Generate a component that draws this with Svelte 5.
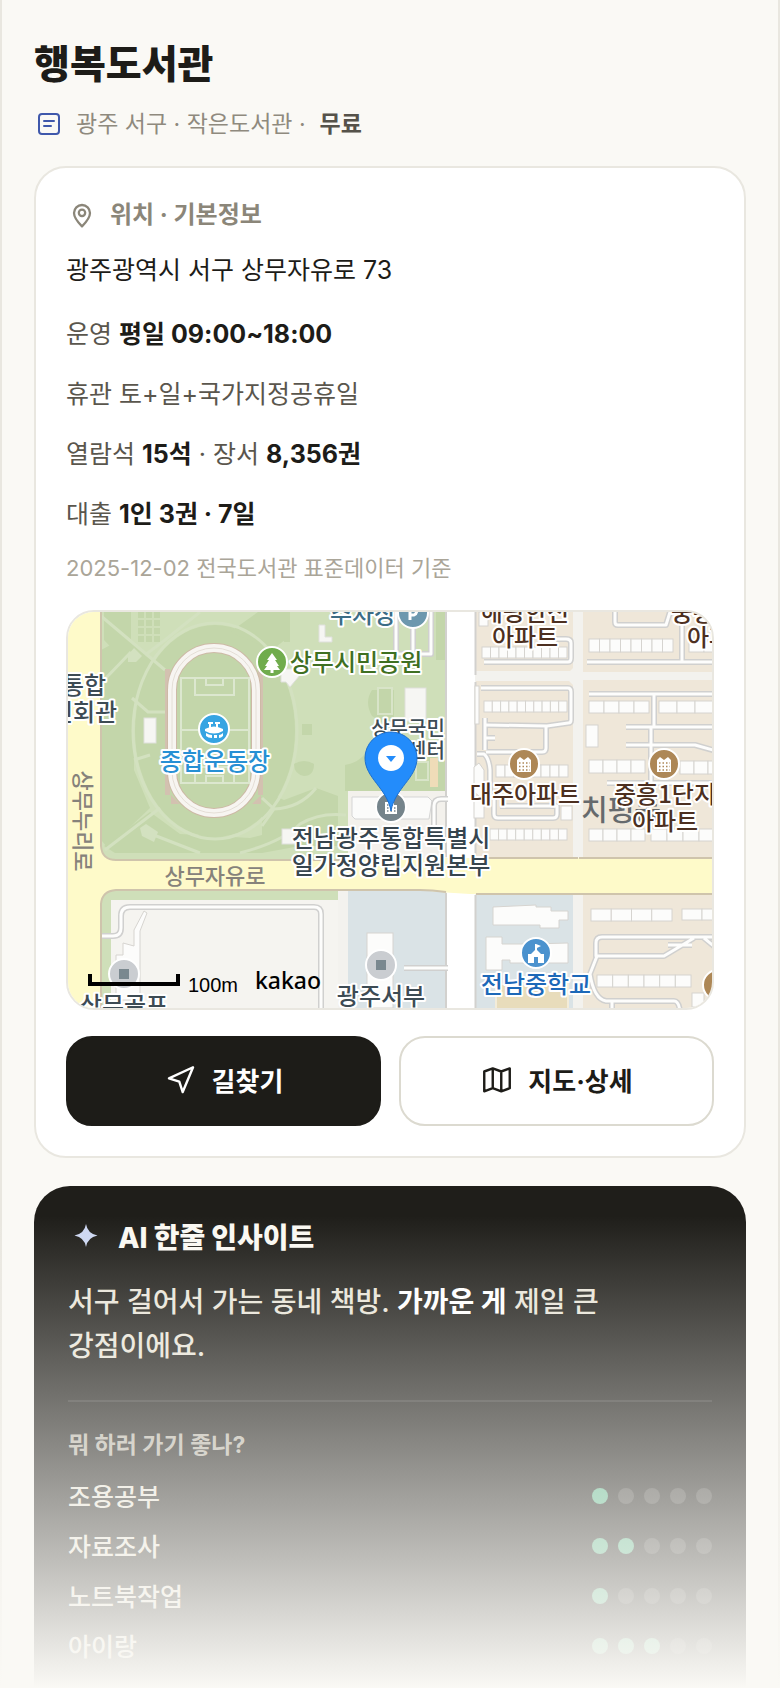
<script>
    const library = {
        name: "행복도서관",
        area: "광주 서구 · 작은도서관 ·",
        fee: "무료",
        address: "광주광역시 서구 상무자유로 73",
        source: "2025-12-02 전국도서관 표준데이터 기준"
    };

    const activities = [
        { label: "조용공부", score: 1 },
        { label: "자료조사", score: 2 },
        { label: "노트북작업", score: 1 },
        { label: "아이랑", score: 3 }
    ];

    // rows of apartment blocks on the map: x, y, width, height, number of cells
    const blocks = [
        [482, 647, 85, 11, 10],
        [589, 639, 84, 13, 8],
        [689, 641, 30, 11, 2],
        [484, 701, 83, 11, 10],
        [589, 701, 60, 12, 4],
        [659, 701, 72, 12, 4],
        [496, 765, 72, 12, 8],
        [589, 760, 56, 13, 4],
        [680, 761, 42, 13, 3],
        [490, 829, 77, 11, 9],
        [589, 829, 56, 12, 4],
        [651, 829, 64, 12, 4],
        [591, 909, 81, 12, 4],
        [682, 909, 40, 11, 2],
        [597, 975, 94, 12, 6]
    ];

    const smallRoads = [
        "M484 662H568Q571 662 571 658V643Q571 639 566 639H556",
        "M587 662H720M682 612V662",
        "M615 606V622Q615 625 618 625H666L670 612",
        "M481 688H568Q571 688 571 692V720Q571 723 568 723L547 726L485 725",
        "M485 718V750M485 738H495M546 727V748Q546 752 542 752H486M477 754H484Q489 758 490 770V800",
        "M589 694H720M654 695V727M626 727H720M651 727V782M626 745H695L720 752M607 783H720",
        "M494 800V814Q494 818 498 818H553Q557 818 557 814V806H500",
        "M720 937H602Q596 937 596 943V956H664L694 938M692 945H668M704 938L716 948",
        "M597 956L590 974Q594 999 606 1001H674Q679 1001 680 1012M612 1001V1012",
        "M101 936H113Q121 936 121 928V916Q121 907 130 907H314Q321 907 321 914V1012",
        "M404 968H448",
        "M396 606V654H431V606M413 626V654",
        "M434 830V806Q434 799 441 799H448"
    ];

    const labels = [
        { x: 363, y: 623, text: "주차장", color: "#3c6c85" },
        { x: 356, y: 671, text: "상무시민공원", color: "#3f7022" },
        { x: 215, y: 770, text: "종합운동장", color: "#2790d4" },
        { x: 84, y: 694, text: "통합", color: "#3d4b54" },
        { x: 84, y: 721, text: "민회관", color: "#3d4b54" },
        { x: 408, y: 736, text: "상무국민", color: "#3d4b54", small: true },
        { x: 408, y: 758, text: "체육센터", color: "#3d4b54", small: true },
        { x: 525, y: 621, text: "해광한신", color: "#4c2f20" },
        { x: 525, y: 646, text: "아파트", color: "#4c2f20" },
        { x: 722, y: 621, text: "중흥2단지", color: "#4c2f20" },
        { x: 720, y: 646, text: "아파트", color: "#4c2f20" },
        { x: 525, y: 803, text: "대주아파트", color: "#4c2f20" },
        { x: 665, y: 803, text: "중흥1단지", color: "#4c2f20" },
        { x: 665, y: 830, text: "아파트", color: "#4c2f20" },
        { x: 391, y: 847, text: "전남광주통합특별시", color: "#37454e" },
        { x: 391, y: 874, text: "일가정양립지원본부", color: "#37454e" },
        { x: 536, y: 993, text: "전남중학교", color: "#1c68b8" },
        { x: 381, y: 1005, text: "광주서부", color: "#3d4b54" },
        { x: 124, y: 1014, text: "상무골프", color: "#3d4b54" }
    ];
</script>

<main>
    <header>
        <h1>{library.name}</h1>
        <div class="meta">
            <svg class="icon" viewBox="0 0 30 30" fill="none" stroke="#3f58ab" stroke-width="2" stroke-linecap="round">
                <rect x="5" y="5" width="20" height="20" rx="3" />
                <path d="M10 12H20M10 17H17" />
            </svg>
            <span>{library.area}</span>
            <strong>{library.fee}</strong>
        </div>
    </header>

    <section class="card">
        <h2>
            <svg class="icon" viewBox="0 0 24 24" fill="none" stroke="currentColor" stroke-width="1.7">
                <path d="M12 20.5c3.6-3.6 6-6.6 6-10a6 6 0 1 0-12 0c0 3.4 2.4 6.4 6 10z" stroke-linejoin="round" />
                <circle cx="12" cy="10.4" r="2.4" />
            </svg>
            위치 · 기본정보
        </h2>
        <p class="address">{library.address}</p>
        <div class="facts">
            <p>운영 <b>평일 09:00~18:00</b></p>
            <p>휴관 토+일+국가지정공휴일</p>
            <p>열람석 <b>15석</b> · 장서 <b>8,356권</b></p>
            <p>대출 <b>1인 3권 · 7일</b></p>
        </div>
        <p class="source">{library.source}</p>

        <div class="map">
            <svg viewBox="68 612 644 396" preserveAspectRatio="xMidYMid slice" role="img" aria-label="지도">
                <rect x="0" y="560" width="800" height="500" fill="#f3f2ee" />

                <!-- park -->
                <path d="M101 606H446V791H348V860H114Q101 858 101 844Z" fill="#cfdfb9" />
                <path d="M104 612H131V640L165 672L152 690L104 640Z M101 650L120 640L150 668L134 715V770L150 808L108 848L101 840Z" fill="#c3d6aa" />
                <ellipse cx="215" cy="731" rx="80" ry="106" fill="#c3d6aa" />
                <path d="M258 612H290V636L272 650L230 632ZM262 790L284 800L316 788L338 796V846H300L262 853H115L104 846L150 812L180 834L250 838L262 835Z" fill="#c3d6aa" />
                <path d="M372 690H394V730L372 716Q364 702 372 690ZM436 612H446V660H436ZM345 765Q365 762 372 740L446 760V791H345Z" fill="#c3d6aa" />
                <g fill="#c3d6aa">
                    {#each [0, 1, 2, 3] as row}
                        {#each [0, 1, 2] as col}
                            <rect x={138 + col * 8} y={612 + row * 8} width="6" height="6" />
                            <rect x={268 + col * 8} y={612 + row * 8} width="6" height="6" />
                        {/each}
                    {/each}
                </g>
                <g fill="none" stroke="#d3e1c0" stroke-width="3">
                    <ellipse cx="215" cy="731" rx="82" ry="108" />
                    <path d="M101 616L165 670M131 652L104 680M132 698L148 712H168M134 760L150 755M160 808L105 850M262 798L274 809L262 826M146 832L200 853M274 809Q300 808 316 788M240 853Q282 842 300 824Q320 812 346 815M145 655L165 640L200 612" />
                </g>
                <path d="M128 655L134 648L142 656L136 662H128ZM140 828L146 824L158 832L154 842L142 836Z" fill="#d3e1c0" />
                <g fill="#c3d6aa">
                    <path d="M294 764Q304 758 314 764Q314 776 304 776Q294 774 294 764Z" />
                    <rect x="302" y="724" width="10" height="11" />
                    <rect x="272" y="722" width="7" height="15" />
                    <rect x="378" y="688" width="14" height="26" stroke="#d8e4c8" stroke-width="2" />
                    <rect x="416" y="762" width="12" height="18" stroke="#d8e4c8" stroke-width="2" />
                </g>
                <path d="M430 758H438V787H430Z" fill="#efdcb8" />

                <!-- stadium -->
                <path d="M165 669H170V795H165ZM258 669H263V795H258ZM171 795L180 804H171ZM252 804L261 795V804Z" fill="#d3c1b0" />
                <rect x="172" y="648" width="84" height="165" rx="42" fill="#c3d6aa" stroke="#cdb9a6" stroke-width="10" />
                <rect x="172" y="648" width="84" height="165" rx="42" fill="none" stroke="#f7f5f1" stroke-width="8" />
                <rect x="172" y="648" width="84" height="165" rx="42" fill="none" stroke="#e4ded6" stroke-width="1" />
                <g fill="none" stroke="#dce7cf" stroke-width="2">
                    <rect x="181" y="678" width="68" height="105" />
                    <path d="M181 730H249M195 678V695H234V678M206 678V685H223V678M195 783V767H234V783M206 783V776H223V783" />
                </g>

                <!-- buildings in the park -->
                <g fill="#f6f6f3" stroke="#dfe0dc" stroke-width="1">
                    <path d="M319 625H325V637H332V642H319Z" />
                    <path d="M281 669H300V675L290 687L286 682H281Z" />
                    <rect x="144" y="718" width="12" height="25" />
                    <rect x="405" y="688" width="21" height="33" />
                    <rect x="282" y="829" width="14" height="15" />
                </g>
                <path d="M348 791H446V860H348Z" fill="#f3f1ec" />
                <path d="M352 797H428L432 801L429 819H355L352 816Z" fill="#fbfbfa" stroke="#d5d5d5" />

                <!-- residential blocks -->
                <path d="M476 606H573V668L570 671H476ZM476 681H569L573 685V858H476ZM583 606H720V672H583ZM583 680H720V858H583ZM583 894H720V1012H583Z" fill="#efe7d9" />
                <path d="M348 891H446V1012H348ZM476 895H573V1012H476Z" fill="#dae3e6" />
                <path d="M101 890H338V900H111V1012H101Z" fill="#cfdfb9" />
                <path d="M111 900H338V1012H111Z" fill="#f5f4f0" />
                <path d="M496 984H568V1012H496Z" fill="#e8dcbb" stroke="#f3ecd9" stroke-width="2" />
                <rect x="447" y="606" width="28" height="410" fill="#ffffff" />
                <path d="M446 606V857M475.5 606V675M475.5 682V857M446 893V1012M475.5 895V1012" stroke="#d2d1ce" stroke-width="2" />

                {#each smallRoads as d}
                    <path {d} fill="none" stroke="#d0d0cf" stroke-width="6" stroke-linejoin="round" />
                {/each}
                {#each smallRoads as d}
                    <path {d} fill="none" stroke="#fdfdfc" stroke-width="3" stroke-linejoin="round" />
                {/each}

                <!-- main roads -->
                <path d="M60 606H101V846Q101 860 116 860H348L447 858H720V894H470Q450 893 430 891L420 890H116Q101 890 101 904V1012H60Z" fill="#fefac9" />
                <path d="M101 606V846Q102 860 116 860H348M476 858H578M579 858H720M720 894H476M446 892Q432 890 420 890H116Q102 891 101 904V1012" fill="none" stroke="#cfc4ac" stroke-width="2" />

                <g fill="#fcfcfb" stroke="#d6d4d0" stroke-width="1">
                    {#each blocks as [x, y, w, h, n]}
                        {#each Array(n) as _, i}
                            <rect x={x + (w / n) * i} {y} width={w / n} height={h} />
                        {/each}
                    {/each}
                    <path d="M493 907L536 905V907H551V911H568V920H559V928H540V925H493Z" />
                    <path d="M486 937H502V944H530L568 943V963H510V960H502V970H486Z" />
                    <path d="M144 911L134 930V946L123 943V955H116V1000H140V931L147 913Z" />
                    <rect x="367" y="933" width="26" height="75" />
                    <rect x="475" y="686" width="4" height="38" />
                    <rect x="586" y="725" width="12" height="22" />
                    <path d="M474 767L479 763L484 770V800L474 792Z" />
                    <rect x="474" y="800" width="10" height="18" />
                    <rect x="561" y="806" width="11" height="14" />
                    <rect x="479" y="612" width="9" height="14" />
                    <rect x="692" y="993" width="12" height="14" />
                </g>

                <!-- place icons -->
                <g stroke="#ffffff" stroke-width="2">
                    <circle cx="413" cy="613" r="15" fill="#6d98ae" />
                    <circle cx="272" cy="662" r="15" fill="#70ac4d" />
                    <circle cx="214" cy="729" r="15" fill="#36a4e2" />
                    <circle cx="524" cy="764" r="15" fill="#ad8756" />
                    <circle cx="664" cy="764" r="15" fill="#ad8756" />
                    <circle cx="718" cy="985" r="15" fill="#ad8756" />
                    <circle cx="391" cy="807" r="15" fill="#75848b" />
                    <circle cx="536" cy="953" r="15" fill="#4b92ce" />
                    <circle cx="381" cy="965" r="15" fill="#cacdd1" />
                    <circle cx="124" cy="974" r="15" fill="#cacdd1" />
                </g>
                <path d="M376 960H386V970H376ZM119 969H129V979H119Z" fill="#7a888f" />
                <path d="M410 620V606H414A5 5 0 0 1 414 615H410" fill="none" stroke="#ffffff" stroke-width="3" />
                <path d="M272 653L277 660H275L279 666H277L280 670H273.5V673H270.5V670H264L267 666H265L269 660H267Z" fill="#ffffff" />
                <g fill="#ffffff">
                    <path d="M205 729Q214 724 223 729V731Q214 736 205 731Z" />
                    <path d="M206 733Q209 735 212 735V738Q208 738 206 736ZM214 735V738H217V735ZM219 735Q221 735 223 733V736Q221 738 219 738Z" />
                    <path d="M208 722H213V724H211V728H209V724H208ZM215 722H220V724H218V728H216V724H215Z" />
                    <path d="M536 944L541 946L537 948V950L541 954H544V963H538V957H534V963H528V954H531L535 950V944Z" />
                </g>
                {#each [524, 664] as cx}
                    <path d="M{cx - 7} 760L{cx - 4} 757L{cx} 760L{cx + 4} 757L{cx + 7} 760V772H{cx - 7}Z" fill="#ffffff" />
                    <path d="M{cx - 5} 763H{cx + 6}M{cx - 5} 766.5H{cx + 6}M{cx - 5} 770H{cx + 6}" stroke="#ad8756" stroke-width="1.5" stroke-dasharray="1.5 2" />
                {/each}
                <path d="M385 802H388V800H394V805H397V814H385Z" fill="#ffffff" />
                <path d="M387 805H394M387 808H396M387 811H396" stroke="#75848b" stroke-width="1.5" stroke-dasharray="1.5 2" />

                <!-- map names -->
                <text class="road" x="215" y="884">상무자유로</text>
                <text class="road" transform="translate(75 821) rotate(90)">상무누리로</text>
                <text class="district" x="621" y="821">치평동</text>
                {#each labels as { x, y, text, color, small }}
                    <text class="place" class:small {x} {y} fill={color}>{text}</text>
                {/each}

                <!-- selected place -->
                <path d="M391 811C387 788 365 778 365 758A26 26 0 1 1 417 758C417 778 395 788 391 811Z" fill="#238cfb" stroke="#1b6fd0" stroke-width="1" />
                <circle cx="391" cy="758" r="13" fill="#ffffff" />
                <path d="M386 756H396L391 762Z" fill="#238cfb" />

                <path d="M90 974V984H178V974" fill="none" stroke="#000000" stroke-width="4" />
                <text class="scale" x="188" y="992">100m</text>
                <text class="brand" x="255" y="989">kakao</text>
            </svg>
        </div>

        <div class="actions">
            <a class="primary" href="#route">
                <svg viewBox="0 0 24 24" fill="none" stroke="currentColor" stroke-width="1.7" stroke-linejoin="round">
                    <path d="M20.5 3L3.5 10.8L10.8 13.2L13.2 20.5Z" />
                </svg>
                <span>길찾기</span>
            </a>
            <a href="#detail">
                <svg viewBox="0 0 24 24" fill="none" stroke="currentColor" stroke-width="1.7" stroke-linejoin="round">
                    <path d="M3 6L9 3.8L15 6L21 3.8V17.8L15 20L9 17.8L3 20ZM9 3.8V17.8M15 6V20" />
                </svg>
                <span>지도·상세</span>
            </a>
        </div>
    </section>

    <section class="insight">
        <h2>
            <svg viewBox="0 0 36 36" fill="#cdd7f2">
                <path d="M18 4Q19.5 13.5 29.5 15.5Q19.5 17.5 18 27Q16.5 17.5 6.5 15.5Q16.5 13.5 18 4Z" />
            </svg>
            AI 한줄 인사이트
        </h2>
        <p>서구 걸어서 가는 동네 책방. <b>가까운 게</b> 제일 큰 강점이에요.</p>
        <h3>뭐 하러 가기 좋나?</h3>
        <ul>
            {#each activities as { label, score }}
                <li>
                    <span class="label">{label}</span>
                    <span class="dots" role="img" aria-label="5점 중 {score}점">
                        {#each Array(5) as _, i}
                            <i class:on={i < score}></i>
                        {/each}
                    </span>
                </li>
            {/each}
        </ul>
    </section>

    <div class="fade"></div>
</main>

<style>
    :global(body) {
        background: #faf9f5;
    }

    main {
        position: relative;
        box-sizing: border-box;
        padding: 40px 32px 0;
        border: solid #e9e7e0;
        border-width: 0 2px;
        background: #faf9f5;
        color: #1d1c18;
        font-family: "Inter", "Noto Sans CJK KR", sans-serif;
        word-break: keep-all;
    }

    h1, h2, h3, p, ul {
        margin: 0;
        padding: 0;
    }

    h1 {
        font-size: 39px;
        line-height: 48px;
        font-weight: 800;
    }

    .icon {
        flex: none;
        width: 32px;
        height: 32px;
    }

    .meta {
        display: flex;
        align-items: center;
        margin: 20px 0 26px;
        font-size: 23px;
        line-height: 32px;
        color: #8f8a7e;
    }

    .meta .icon {
        width: 30px;
        height: 30px;
        margin-right: 12px;
    }

    .meta strong {
        margin-left: 14px;
        font-weight: 600;
        color: #55524a;
    }

    .card {
        padding: 30px;
        border: 2px solid #e9e7e0;
        border-radius: 32px;
        background: #ffffff;
    }

    .card h2 {
        display: flex;
        align-items: center;
        gap: 12px;
        font-size: 24px;
        line-height: 34px;
        font-weight: 700;
        color: #8b8679;
    }

    .address {
        margin-top: 18px;
        font-size: 25px;
        line-height: 40px;
    }

    .facts {
        display: flex;
        flex-direction: column;
        gap: 20px;
        margin-top: 24px;
        font-size: 25px;
        line-height: 40px;
        color: #5a564d;
    }

    .facts b {
        font-weight: 700;
        color: #1d1c18;
    }

    .source {
        margin-top: 18px;
        font-size: 22px;
        line-height: 32px;
        color: #aaa598;
    }

    .map {
        height: 396px;
        margin: 26px 0;
        border: 2px solid #e9e7e0;
        border-radius: 28px;
        overflow: hidden;
    }

    .map svg {
        display: block;
        width: 100%;
        height: 100%;
    }

    .map text {
        font-family: "Noto Sans CJK KR", sans-serif;
        text-anchor: middle;
    }

    .map .place {
        font-size: 24px;
        font-weight: 500;
        stroke: #ffffff;
        stroke-width: 4px;
        stroke-linejoin: round;
        paint-order: stroke;
    }

    .map .small {
        font-size: 20px;
    }

    .map .road {
        font-size: 22px;
        font-weight: 500;
        fill: #86827b;
    }

    .map .district {
        font-size: 29px;
        font-weight: 500;
        fill: #666a6d;
    }

    .map .scale {
        font-family: "Liberation Sans", sans-serif;
        font-size: 20px;
        text-anchor: start;
    }

    .map .brand {
        font-family: "Noto Sans", sans-serif;
        font-size: 23px;
        font-weight: 500;
        text-anchor: start;
    }

    .actions {
        display: flex;
        gap: 18px;
    }

    .actions a {
        flex: 1;
        display: flex;
        align-items: center;
        justify-content: center;
        gap: 14px;
        box-sizing: border-box;
        height: 90px;
        padding-bottom: 3px;
        border: 2px solid #dcdad0;
        border-radius: 26px;
        color: #1d1c18;
        font-size: 26px;
        font-weight: 700;
        text-decoration: none;
    }

    .actions a.primary {
        border-color: #1d1c18;
        background: #1d1c18;
        color: #ffffff;
    }

    .actions svg {
        width: 34px;
        height: 34px;
    }

    .insight {
        margin-top: 28px;
        padding: 34px 34px 17px;
        border-radius: 36px 36px 0 0;
        background: #1f1e1a;
        color: #e8e4d8;
    }

    .insight h2 {
        display: flex;
        align-items: center;
        gap: 14px;
        font-size: 28px;
        line-height: 36px;
        font-weight: 800;
        color: #faf8f2;
    }

    .insight h2 svg {
        width: 36px;
        height: 36px;
    }

    .insight p {
        margin-top: 24px;
        font-size: 28px;
        line-height: 44px;
        font-weight: 500;
    }

    .insight b {
        font-weight: 700;
        color: #ffffff;
    }

    h3 {
        margin-top: 32px;
        padding-top: 27px;
        border-top: 2px solid rgba(255, 255, 255, 0.1);
        font-size: 23px;
        line-height: 32px;
        font-weight: 700;
        color: #b6b2a6;
    }

    ul {
        margin-top: 10px;
        list-style: none;
    }

    li {
        display: flex;
        align-items: center;
        justify-content: space-between;
        height: 50px;
    }

    .label {
        padding-bottom: 3px;
        font-size: 25px;
        font-weight: 500;
    }

    .dots {
        display: flex;
        gap: 10px;
    }

    .dots i {
        width: 16px;
        height: 16px;
        border-radius: 50%;
        background: rgba(255, 255, 255, 0.16);
    }

    .dots i.on {
        background: #5ab58a;
    }

    /* hides the rest of the page behind the background colour */
    .fade {
        position: absolute;
        right: -2px;
        bottom: 0;
        left: -2px;
        height: 472px;
        background: linear-gradient(rgba(250, 249, 245, 0), #faf9f5);
        pointer-events: none;
    }
</style>
